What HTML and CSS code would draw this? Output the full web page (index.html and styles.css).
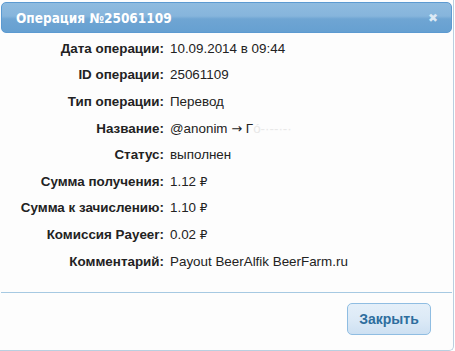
FILE: index.html
```html
<!DOCTYPE html>
<html>
<head>
<meta charset="utf-8">
<link rel="stylesheet" href="styles.css">
</head>
<body>
<div class="dialog">
  <div class="titlebar">
    <span class="title">Операция №25061109</span>
    <span class="close">&#x2716;</span>
  </div>
  <div class="content">
    <div class="grid">
      <div class="lbl">Дата операции:</div><div class="val">10.09.2014 в 09:44</div>
      <div class="lbl">ID операции:</div><div class="val">25061109</div>
      <div class="lbl">Тип операции:</div><div class="val">Перевод</div>
      <div class="lbl">Название:</div><div class="val">@anonim <span class="arrow">→</span> Г<span class="blur">ó-·--·-·</span></div>
      <div class="lbl">Статус:</div><div class="val">выполнен</div>
      <div class="lbl">Сумма получения:</div><div class="val">1.12 <span class="rub">₽</span></div>
      <div class="lbl">Сумма к зачислению:</div><div class="val">1.10 <span class="rub">₽</span></div>
      <div class="lbl">Комиссия Payeer:</div><div class="val">0.02 <span class="rub">₽</span></div>
      <div class="lbl">Комментарий:</div><div class="val">Payout BeerAlfik BeerFarm.ru</div>
    </div>
  </div>
  <div class="footer">
    <button class="btn">Закрыть</button>
  </div>
</div>
</body>
</html>
```
FILE: styles.css
```css
html, body {
  margin: 0;
  padding: 0;
  background: #ffffff;
}
body {
  font-family: "Liberation Sans", Arial, sans-serif;
  font-size: 13.4px;
  color: #222;
}
.dialog {
  box-sizing: border-box;
  width: 454px;
  height: 351px;
  padding: 2px 1px 0 1px;
  border-right: 1px solid #b9cfe0;
  border-bottom: 1px solid #b9cfe0;
  border-radius: 0 0 5px 0;
  background: #fdfdfd;
  display: flex;
  flex-direction: column;
}
.titlebar {
  box-sizing: border-box;
  height: 31px;
  border: 1px solid #5c9ad1;
  border-radius: 5px;
  background: linear-gradient(to bottom, #8fbbdf 0%, #86b5dc 45%, #6fa5d3 55%, #66a0d1 100%);
  display: flex;
  align-items: center;
  justify-content: space-between;
  padding: 0 13px 0 14px;
}
.title {
  color: #fff;
  font-family: "DejaVu Sans Condensed", "DejaVu Sans", sans-serif;
  font-stretch: condensed;
  font-weight: bold;
  font-size: 13.5px;
}
.close {
  color: #dce9f5;
  font-size: 12px;
  font-family: "DejaVu Sans", sans-serif;
}
.content {
  flex: 1;
  padding-top: 2px;
}
.grid {
  display: grid;
  grid-template-columns: 163px 1fr;
  grid-auto-rows: 26.6px;
  column-gap: 6px;
  align-items: center;
}
.lbl {
  text-align: right;
  font-weight: bold;
  color: #222;
}
.val {
  color: #222;
}
.arrow {
  font-family: "DejaVu Sans", sans-serif;
  font-size: 13px;
}
.blur {
  color: #e8e8e8;
}
.rub {
  font-family: "DejaVu Sans", sans-serif;
  font-size: 12px;
}
.footer {
  border-top: 1px solid #a6c9e2;
  height: 58px;
  display: flex;
  justify-content: flex-end;
  align-items: flex-start;
  padding: 10px 21px 0 0;
  box-sizing: border-box;
}
.btn {
  width: 84px;
  height: 32px;
  border: 1px solid #8fbde2;
  border-radius: 5px;
  background: linear-gradient(to bottom, #e4eff9 0%, #dbe9f6 55%, #cde0f2 100%);
  color: #2e6e9e;
  font-family: "Liberation Sans", Arial, sans-serif;
  font-weight: bold;
  font-size: 14px;
  padding: 0;
}
```
